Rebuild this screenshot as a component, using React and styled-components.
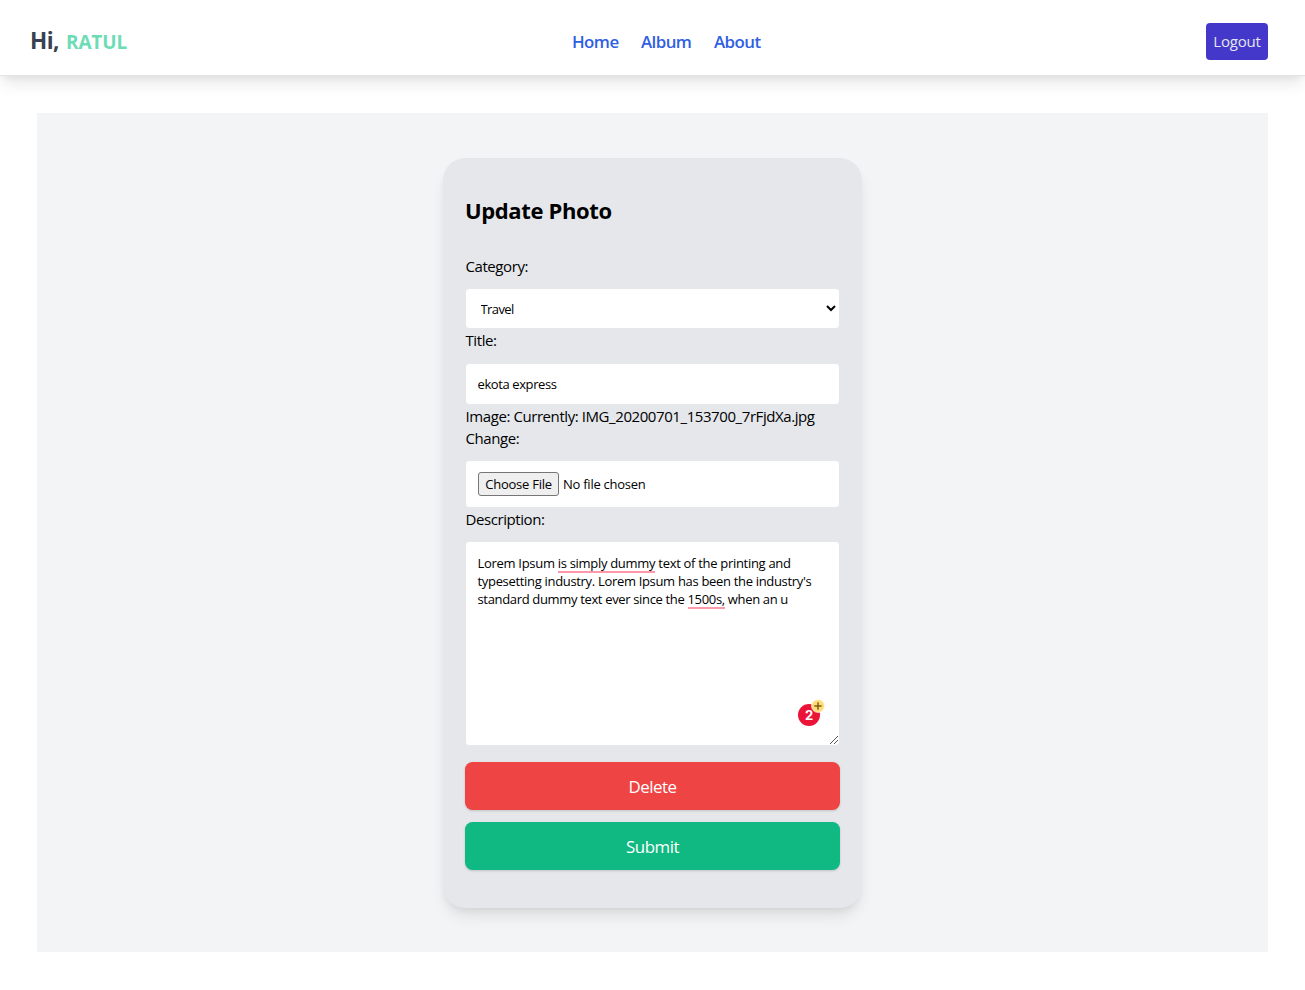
import React from "react";
import styled, { createGlobalStyle } from "styled-components";

const GlobalStyle = createGlobalStyle`
  *, *::before, *::after { box-sizing: border-box; }
  body {
    margin: 0;
    background: #fff;
    color: #000;
    font-family: "Segoe UI", "Open Sans", "Noto Sans", sans-serif;
    font-size: 15px;
    line-height: 22px;
  }
`;

const Header = styled.header`
  display: grid;
  grid-template-columns: 1fr auto 1fr;
  align-items: center;
  height: 76px;
  padding: 8px 37px 0 30px;
  background: #fff;
  border-bottom: 1px solid #e5e5e5;
  box-shadow: 0 10px 15px -3px rgba(0, 0, 0, 0.1), 0 4px 6px -2px rgba(0, 0, 0, 0.05);
`;

const Greeting = styled.div`
  display: flex;
  align-items: baseline;
  gap: 7px;
  padding-bottom: 1px;
  color: #374151;
  font-size: 22.5px;
  font-weight: 700;
  line-height: 30px;
  letter-spacing: -0.5px;
`;

const UserName = styled.span`
  color: #6ddcb5;
  font-size: 19px;
  font-weight: 700;
  letter-spacing: -0.15px;
`;

const Nav = styled.nav`
  display: flex;
  gap: 22px;
  margin-left: 36px;
`;

const NavLink = styled.a`
  width: ${(p) => p.$width}px;
  color: #2f5fe3;
  font-size: 16.875px;
  font-weight: 600;
  letter-spacing: -0.55px;
  white-space: nowrap;
`;

const LogoutButton = styled.button`
  justify-self: end;
  width: 62px;
  height: 37px;
  padding: 0 0 2px;
  border: 0;
  border-radius: 4px;
  background: #4338ca;
  color: #e5e7eb;
  font: inherit;
  letter-spacing: -0.2px;
`;

const Main = styled.main`
  display: flex;
  justify-content: center;
  align-items: flex-start;
  height: 839px;
  margin: 37px 37px 38px;
  padding-top: 45px;
  background: #f3f4f6;
`;

const Card = styled.form`
  display: flex;
  flex-direction: column;
  width: 419px;
  height: 750px;
  padding: 38px 22px;
  border-radius: 22.5px;
  background: #e5e7eb;
  box-shadow: 0 10px 15px -3px rgba(0, 0, 0, 0.1), 0 4px 6px -2px rgba(0, 0, 0, 0.05);

  > * {
    flex: none;
  }
`;

const Title = styled.h1`
  height: 59px;
  margin: 0;
  font-size: 22px;
  font-weight: 700;
  line-height: 28px;
  letter-spacing: -0.37px;
`;

const Label = styled.label`
  display: block;
  height: ${(p) => p.$height}px;
  padding-left: 0.5px;
  font-size: 15px;
  line-height: 22px;
  letter-spacing: -0.42px;
  white-space: nowrap;
`;

const fieldStyles = `
  display: block;
  width: 100%;
  margin: 0;
  border: 1px solid #e5e7eb;
  border-radius: 4px;
  background: #fff;
  color: #000;
  font-family: inherit;
  font-size: 13px;
  line-height: 18px;
  letter-spacing: -0.32px;
`;

const Select = styled.select`
  ${fieldStyles}
  height: 41px;
  padding: 1px 1px 0 10.5px;
  letter-spacing: -0.6px;
`;

const TextInput = styled.input`
  ${fieldStyles}
  height: 42px;
  padding: 0 11.5px;
  letter-spacing: -0.4px;
`;

const FileInput = styled.input`
  ${fieldStyles}
  height: 48px;
  padding: 11px 12px;
  letter-spacing: -0.25px;

  &::file-selector-button {
    height: 24px;
    width: 81px;
    margin: 0 4px 0 0;
    padding: 0;
    border: 1px solid #767676;
    border-radius: 3px;
    background: #efefef;
    color: #000;
    font: inherit;
    letter-spacing: inherit;
  }
`;

const DescriptionBox = styled.div`
  ${fieldStyles}
  position: relative;
  height: 205px;
  margin-bottom: 16px;
  padding: 12px 11.5px;
`;

const TextLine = styled.div`
  white-space: pre;
  letter-spacing: ${(p) => p.$spacing}px;
`;

const Flagged = styled.span`
  padding-bottom: 0.5px;
  box-shadow: inset 0 -2px #ff98a9;
`;

const ResizeGrip = styled.svg`
  position: absolute;
  right: 0;
  bottom: 0;
`;

const IssueBadge = styled.div`
  position: absolute;
  right: 19px;
  bottom: 19px;
  width: 22px;
  height: 22px;
  border-radius: 50%;
  background: #eb1436;
  color: #fff;
  font-family: Inter, sans-serif;
  font-size: 13px;
  font-weight: 700;
  line-height: 22px;
  letter-spacing: 0;
  text-align: center;
`;

const PlusMark = styled.svg`
  position: absolute;
  left: 13px;
  top: -5px;
`;

const ActionButton = styled.button`
  height: 48px;
  margin: 0 0 12px;
  padding: 2px 0 0;
  border: 0;
  border-radius: 7.5px;
  background: ${(p) => p.$color};
  color: #fff;
  font: inherit;
  font-size: 16.875px;
  letter-spacing: -0.45px;
  box-shadow: 0 1px 3px rgba(0, 0, 0, 0.1), 0 1px 2px rgba(0, 0, 0, 0.06);

  &:last-child {
    margin-bottom: 0;
  }
`;

export default function App() {
  return (
    <>
      <GlobalStyle />
      <Header>
        <Greeting>
          Hi, <UserName>RATUL</UserName>
        </Greeting>
        <Nav>
          <NavLink $width={47}>Home</NavLink>
          <NavLink $width={51}>Album</NavLink>
          <NavLink $width={48}>About</NavLink>
        </Nav>
        <LogoutButton type="button">Logout</LogoutButton>
      </Header>
      <Main>
        <Card>
          <Title>Update Photo</Title>
          <Label $height={33}>Category:</Label>
          <Select defaultValue="Travel">
            <option>Travel</option>
          </Select>
          <Label $height={34}>Title:</Label>
          <TextInput defaultValue="ekota express" />
          <Label $height={55}>
            Image: Currently: IMG_20200701_153700_7rFjdXa.jpg
            <br />
            Change:
          </Label>
          <FileInput type="file" />
          <Label $height={33}>Description:</Label>
          <DescriptionBox>
            <TextLine $spacing={-0.3}>
              Lorem Ipsum <Flagged>is simply dummy</Flagged> text of the printing and
            </TextLine>
            <TextLine $spacing={-0.32}>typesetting industry. Lorem Ipsum has been the industry's</TextLine>
            <TextLine $spacing={-0.34}>
              standard dummy text ever since the <Flagged>1500s,</Flagged> when an u
            </TextLine>
            <IssueBadge>
              2
              <PlusMark width="14" height="14" viewBox="0 0 14 14">
                <circle cx="7" cy="7" r="6.5" fill="#ffdc7c" stroke="#fff" strokeWidth="0.6" />
                <path d="M7 3.3v7.4M3.3 7h7.4" stroke="#80600c" strokeWidth="1.5" />
              </PlusMark>
            </IssueBadge>
            <ResizeGrip width="10" height="10" viewBox="0 0 10 10">
              <path d="M1 9L9 1M5 9L9 5" stroke="#555" strokeWidth="1" fill="none" />
            </ResizeGrip>
          </DescriptionBox>
          <ActionButton type="button" $color="#ef4444">Delete</ActionButton>
          <ActionButton type="button" $color="#10b981">Submit</ActionButton>
        </Card>
      </Main>
    </>
  );
}
